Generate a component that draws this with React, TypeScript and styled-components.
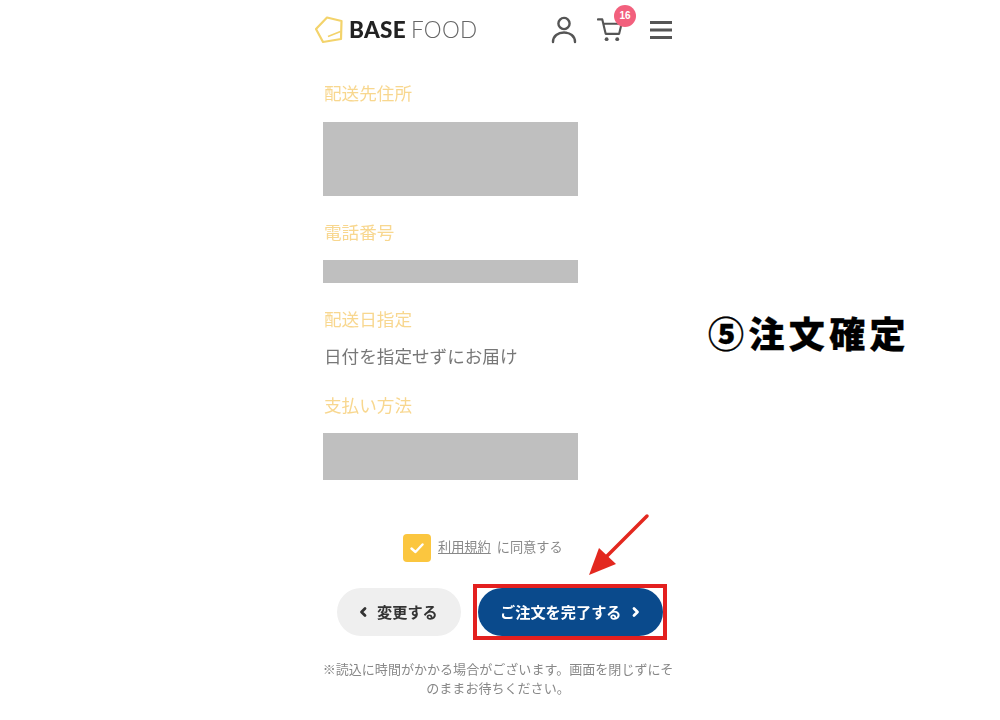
import * as React from 'react';
import styled, { createGlobalStyle } from 'styled-components';

const GlobalStyle = createGlobalStyle`
	html, body {
		margin: 0;
		padding: 0;
		background: #fff;
		font-family: 'Noto Sans CJK JP', 'Liberation Sans', sans-serif;
	}
`;

const Page = styled.div`
	position: relative;
	width: 1000px;
	height: 720px;
	overflow: hidden;
	display: flex;
	padding-left: 312px;
	box-sizing: border-box;
`;

const Phone = styled.main`
	width: 364px;
	flex: none;
	filter: blur(0.35px);
`;

const Header = styled.header`
	height: 60px;
	display: flex;
	align-items: center;
	padding: 0 3px;
`;

const Logo = styled.div`
	width: 236px;
	flex: none;
	display: flex;
	align-items: center;
	gap: 6px;
	font-family: Lato, 'Liberation Sans', sans-serif;
	font-size: 22.5px;
	line-height: 1;
	letter-spacing: 0.3px;
	white-space: nowrap;
`;

const LogoBold = styled.span`
	font-weight: 900;
	color: #222;
`;

const LogoLight = styled.span`
	font-weight: 300;
	color: #666;
	margin-left: 5px;
`;

const IconButton = styled.div<{ $width: number; $mr: number }>`
	position: relative;
	width: ${(p) => p.$width}px;
	margin-right: ${(p) => p.$mr}px;
	display: flex;
	flex: none;
`;

const Badge = styled.span`
	position: absolute;
	top: -12px;
	left: 17px;
	width: 22px;
	height: 22px;
	border-radius: 50%;
	background: #f2607d;
	color: #fff;
	font-family: 'Liberation Sans', sans-serif;
	font-size: 10px;
	font-weight: 700;
	line-height: 22px;
	text-align: center;
`;

const Content = styled.div`
	padding: 21px 0 0 11px;
`;

const Label = styled.div<{ $mt?: number }>`
	margin-top: ${(p) => p.$mt ?? 0}px;
	padding-left: 1px;
	color: #f8d78f;
	font-size: 17.6px;
	line-height: 24px;
	height: 24px;
`;

const Masked = styled.div<{ $h: number; $mt: number }>`
	width: 255px;
	height: ${(p) => p.$h}px;
	margin-top: ${(p) => p.$mt}px;
	background: #bfbfbf;
`;

const Value = styled.div`
	margin-top: 13px;
	padding-left: 1px;
	color: #777;
	font-size: 17.6px;
	line-height: 24px;
	height: 24px;
`;

const Agree = styled.div`
	margin: 54px 0 0 91px;
	height: 28px;
	display: flex;
	align-items: center;
	font-size: 13.2px;
	line-height: 24px;
	color: #888;
`;

const AgreeText = styled.div`
	margin-bottom: 2px;
`;

const CheckBox = styled.div`
	width: 28px;
	height: 28px;
	border-radius: 4px;
	background: #fbc63f;
	display: flex;
	align-items: center;
	justify-content: center;
	margin-right: 7px;
`;

const TermsLink = styled.span`
	text-decoration: underline;
	margin-right: 6px;
`;

const Actions = styled.div`
	display: flex;
	align-items: center;
	margin: 22px 0 0 25px;
`;

const ButtonText = styled.span`
	margin-top: -2px;
`;

const BackButton = styled.div`
	width: 124px;
	height: 48px;
	border-radius: 24px;
	background: #efefef;
	color: #333;
	font-size: 15.2px;
	font-weight: 700;
	display: flex;
	align-items: center;
	padding-left: 22px;
	box-sizing: border-box;
	gap: 10px;
	margin-right: 12px;
`;

const Highlight = styled.div`
	box-sizing: border-box;
	width: 194px;
	height: 56px;
	border: 4px solid #e3201f;
	padding: 0 0 0 1px;
`;

const SubmitButton = styled.div`
	width: 185px;
	height: 48px;
	border-radius: 24px;
	background: #0a4a8c;
	color: #fff;
	font-size: 15.2px;
	font-weight: 700;
	display: flex;
	align-items: center;
	padding-left: 22px;
	box-sizing: border-box;
	gap: 10px;
`;

const Note = styled.p`
	margin: 19px 0 0 9px;
	width: 354px;
	color: #888;
	font-size: 13.05px;
	line-height: 19px;
	text-align: center;
`;

const Callout = styled.h2`
	margin: 307px 0 0 32px;
	font-size: 36px;
	line-height: 50px;
	height: 50px;
	font-weight: 900;
	color: #000;
	letter-spacing: 4.4px;
	white-space: nowrap;
	-webkit-text-stroke: 0.3px #000;
`;

const ArrowMark = styled.svg`
	position: absolute;
	left: 585px;
	top: 510px;
`;

const Chevron = ({ left }: { left?: boolean }) => (
	<svg width="8" height="12" viewBox="0 0 8 12" fill="none">
		<path
			d={left ? 'M6 2.500 2.500 6 6 9.500' : 'M2 2.500 5.500 6 2 9.500'}
			stroke="currentColor"
			strokeWidth="2.800"
			strokeLinecap="round"
			strokeLinejoin="round"
		/>
	</svg>
);

export default function App() {
	return (
		<Page>
			<GlobalStyle />
			<Phone>
				<Header>
					<Logo>
						<svg width="28" height="28" viewBox="0 0 28 28" fill="none">
							<path
								d="M12 1.500 26.500 5 26 23 8 26 1 13Z"
								stroke="#f3d36b"
								strokeWidth="2.200"
								strokeLinejoin="round"
							/>
							<path d="M13 20.500 25.500 15.500" stroke="#f3d36b" strokeWidth="1.800" />
						</svg>
						<span>
							<LogoBold>BASE</LogoBold>
							<LogoLight>FOOD</LogoLight>
						</span>
					</Logo>
					<IconButton $width={26} $mr={20}>
						<svg width="26" height="28" viewBox="0 0 26 28" fill="none" stroke="#555" strokeWidth="2.400">
							<circle cx="13" cy="7.500" r="5.600" />
							<path d="M2 26c0-6 5-9.500 11-9.500s11 3.500 11 9.500" strokeLinecap="round" />
						</svg>
					</IconButton>
					<IconButton $width={26} $mr={26}>
						<svg width="27" height="26" viewBox="0 0 27 26" fill="none" stroke="#555" strokeWidth="2.200">
							<path d="M1 2h4.500l3.500 15h14l2.500-10.500H6.500" strokeLinejoin="round" strokeLinecap="round" />
							<circle cx="10" cy="22.500" r="2" fill="#555" stroke="none" />
							<circle cx="21" cy="22.500" r="2" fill="#555" stroke="none" />
						</svg>
						<Badge>16</Badge>
					</IconButton>
					<IconButton $width={24} $mr={0}>
						<svg width="24" height="20" viewBox="0 0 24 20" fill="none" stroke="#555" strokeWidth="2.800">
							<path d="M1 2.500h22M1 10h22M1 17.500h22" />
						</svg>
					</IconButton>
				</Header>
				<Content>
					<Label>配送先住所</Label>
					<Masked $h={74} $mt={17} />
					<Label $mt={24}>電話番号</Label>
					<Masked $h={23} $mt={16} />
					<Label $mt={24}>配送日指定</Label>
					<Value>日付を指定せずにお届け</Value>
					<Label $mt={25}>支払い方法</Label>
					<Masked $h={47} $mt={16} />
				</Content>
				<Agree>
					<CheckBox>
						<svg width="14" height="11" viewBox="0 0 14 11" fill="none">
							<path d="M1.500 5.500 5.500 9 12.500 1.500" stroke="#fff" strokeWidth="2.400" strokeLinecap="round" strokeLinejoin="round" />
						</svg>
					</CheckBox>
					<AgreeText>
						<TermsLink>利用規約</TermsLink>
						<span>に同意する</span>
					</AgreeText>
				</Agree>
				<Actions>
					<BackButton>
						<Chevron left />
						<ButtonText>変更する</ButtonText>
					</BackButton>
					<Highlight>
						<SubmitButton>
							<ButtonText>ご注文を完了する</ButtonText>
							<Chevron />
						</SubmitButton>
					</Highlight>
				</Actions>
				<Note>※読込に時間がかかる場合がございます。画面を閉じずにそのままお待ちください。</Note>
			</Phone>
			<Callout>⑤注文確定</Callout>
			<ArrowMark width="70" height="70" viewBox="0 0 70 70" fill="none">
				<path d="M62 6 18 50" stroke="#e3281f" strokeWidth="3.500" strokeLinecap="round" />
				<path d="M4 65 14 38 31 54Z" fill="#e3281f" />
			</ArrowMark>
		</Page>
	);
}
